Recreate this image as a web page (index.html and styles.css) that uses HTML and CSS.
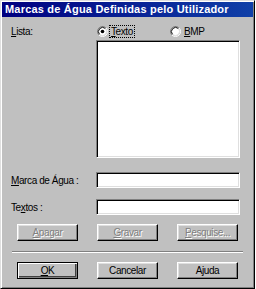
FILE: index.html
```html
<!DOCTYPE html>
<html lang="pt">
<head>
    <meta charset="UTF-8">
    <title>Marcas de Água Definidas pelo Utilizador</title>
    <link rel="stylesheet" href="styles.css">
</head>
<body>
    <div class="window">
        <!-- Barra de título -->
        <div class="titlebar">Marcas de Água Definidas pelo Utilizador</div>

        <div class="content">
            <!-- Lista + tipo -->
            <div class="row">
                <span class="label"><u>L</u>ista:</span>
                <div class="radios">
                    <label class="radio">
                        <svg width="11" height="11" viewBox="0 0 12 12">
                            <circle cx="6" cy="6" r="4.5" fill="#fff"/>
                            <path d="M2.11 9.89A5.5 5.5 0 0 1 9.89 2.11" fill="none" stroke="#808080"/>
                            <path d="M2.82 9.18A4.5 4.5 0 0 1 9.18 2.82" fill="none" stroke="#000"/>
                            <path d="M9.89 2.11A5.5 5.5 0 0 1 2.11 9.89" fill="none" stroke="#fff"/>
                            <path d="M9.18 2.82A4.5 4.5 0 0 1 2.82 9.18" fill="none" stroke="#dfdfdf"/>
                            <circle cx="6" cy="6" r="2" fill="#000"/>
                        </svg>
                        <span class="focus"><u>T</u>exto</span>
                    </label>
                    <label class="radio">
                        <svg width="11" height="11" viewBox="0 0 12 12">
                            <circle cx="6" cy="6" r="4.5" fill="#fff"/>
                            <path d="M2.11 9.89A5.5 5.5 0 0 1 9.89 2.11" fill="none" stroke="#808080"/>
                            <path d="M2.82 9.18A4.5 4.5 0 0 1 9.18 2.82" fill="none" stroke="#000"/>
                            <path d="M9.89 2.11A5.5 5.5 0 0 1 2.11 9.89" fill="none" stroke="#fff"/>
                            <path d="M9.18 2.82A4.5 4.5 0 0 1 2.82 9.18" fill="none" stroke="#dfdfdf"/>
                        </svg>
                        <span><u>B</u>MP</span>
                    </label>
                </div>
            </div>

            <div class="listbox"></div>

            <!-- Campos -->
            <div class="field">
                <span class="label"><u>M</u>arca de Água :</span>
                <div class="input"></div>
            </div>
            <div class="field">
                <span class="label">Te<u>x</u>tos :</span>
                <div class="input"></div>
            </div>

            <div class="buttons">
                <button class="btn" disabled><u>A</u>pagar</button>
                <button class="btn" disabled><u>G</u>ravar</button>
                <button class="btn" disabled><u>P</u>esquise...</button>
            </div>

            <div class="separator"></div>

            <div class="buttons">
                <button class="btn btn-default"><u>O</u>K</button>
                <button class="btn">Cancelar</button>
                <button class="btn">Ajuda</button>
            </div>
        </div>
    </div>
</body>
</html>
```

FILE: styles.css
```css
body {
    margin: 0;
    background-color: #ffffff;
    font-family: "Liberation Sans", Arial, sans-serif;
    font-size: 10px;
    letter-spacing: -0.4px;
    color: #000000;
}

.window {
    box-sizing: border-box;
    width: 255px;
    height: 289px;
    padding: 1px;
    background-color: #c0c0c0;
    border: 1px solid;
    border-color: #dfdfdf #000000 #000000 #dfdfdf;
    box-shadow: inset 1px 1px #ffffff, inset -1px -1px #808080;
}

.titlebar {
    height: 15px;
    line-height: 15px;
    padding-left: 3px;
    background: linear-gradient(to right, #000080, #1040a8);
    color: #ffffff;
    font-weight: bold;
    font-size: 11px;
    letter-spacing: 0.2px;
    white-space: nowrap;
    overflow: hidden;
}

.content {
    padding: 7px 0 0 9px;
}

.row {
    display: flex;
    align-items: center;
    height: 14px;
}

.label {
    width: 85px;
    flex-shrink: 0;
}

.radios {
    display: flex;
}

.radio {
    display: flex;
    align-items: center;
    width: 72px;
    padding-left: 1px;
}

.radio svg {
    margin-right: 1px;
}

.radio span {
    padding: 0 1px;
    border: 1px solid transparent;
}

.radio .focus {
    border: 1px dotted #000000;
}

.listbox {
    box-sizing: border-box;
    width: 144px;
    height: 118px;
    margin: 2px 0 0 85px;
    background-color: #ffffff;
    border: 1px solid;
    border-color: #808080 #ffffff #ffffff #808080;
    box-shadow: inset 1px 1px #000000, inset -1px -1px #dfdfdf;
}

.field {
    display: flex;
    align-items: center;
    height: 16px;
    margin-top: 14px;
}

.field + .field {
    margin-top: 11px;
}

.input {
    box-sizing: border-box;
    width: 144px;
    height: 16px;
    background-color: #ffffff;
    border: 1px solid;
    border-color: #808080 #ffffff #ffffff #808080;
    box-shadow: inset 1px 1px #000000, inset -1px -1px #dfdfdf;
}

.buttons {
    display: flex;
    gap: 19px;
    margin: 9px 0 0 6px;
}

.btn {
    box-sizing: border-box;
    width: 61px;
    height: 17px;
    padding: 0;
    background-color: #c0c0c0;
    border: 1px solid;
    border-color: #ffffff #000000 #000000 #ffffff;
    box-shadow: inset -1px -1px #808080, inset 1px 1px #dfdfdf;
    font-family: "Liberation Sans", Arial, sans-serif;
    font-size: 10px;
    letter-spacing: -0.4px;
    color: #000000;
}

.btn:disabled {
    color: #808080;
    text-shadow: 1px 1px #ffffff;
}

.btn-default {
    border-color: #000000;
    box-shadow: inset 1px 1px #ffffff, inset -1px -1px #808080, inset -2px -2px #404040;
}

.separator {
    width: 231px;
    height: 0;
    margin: 10px 0 0 1px;
    border-top: 1px solid #808080;
    border-bottom: 1px solid #ffffff;
}
```
